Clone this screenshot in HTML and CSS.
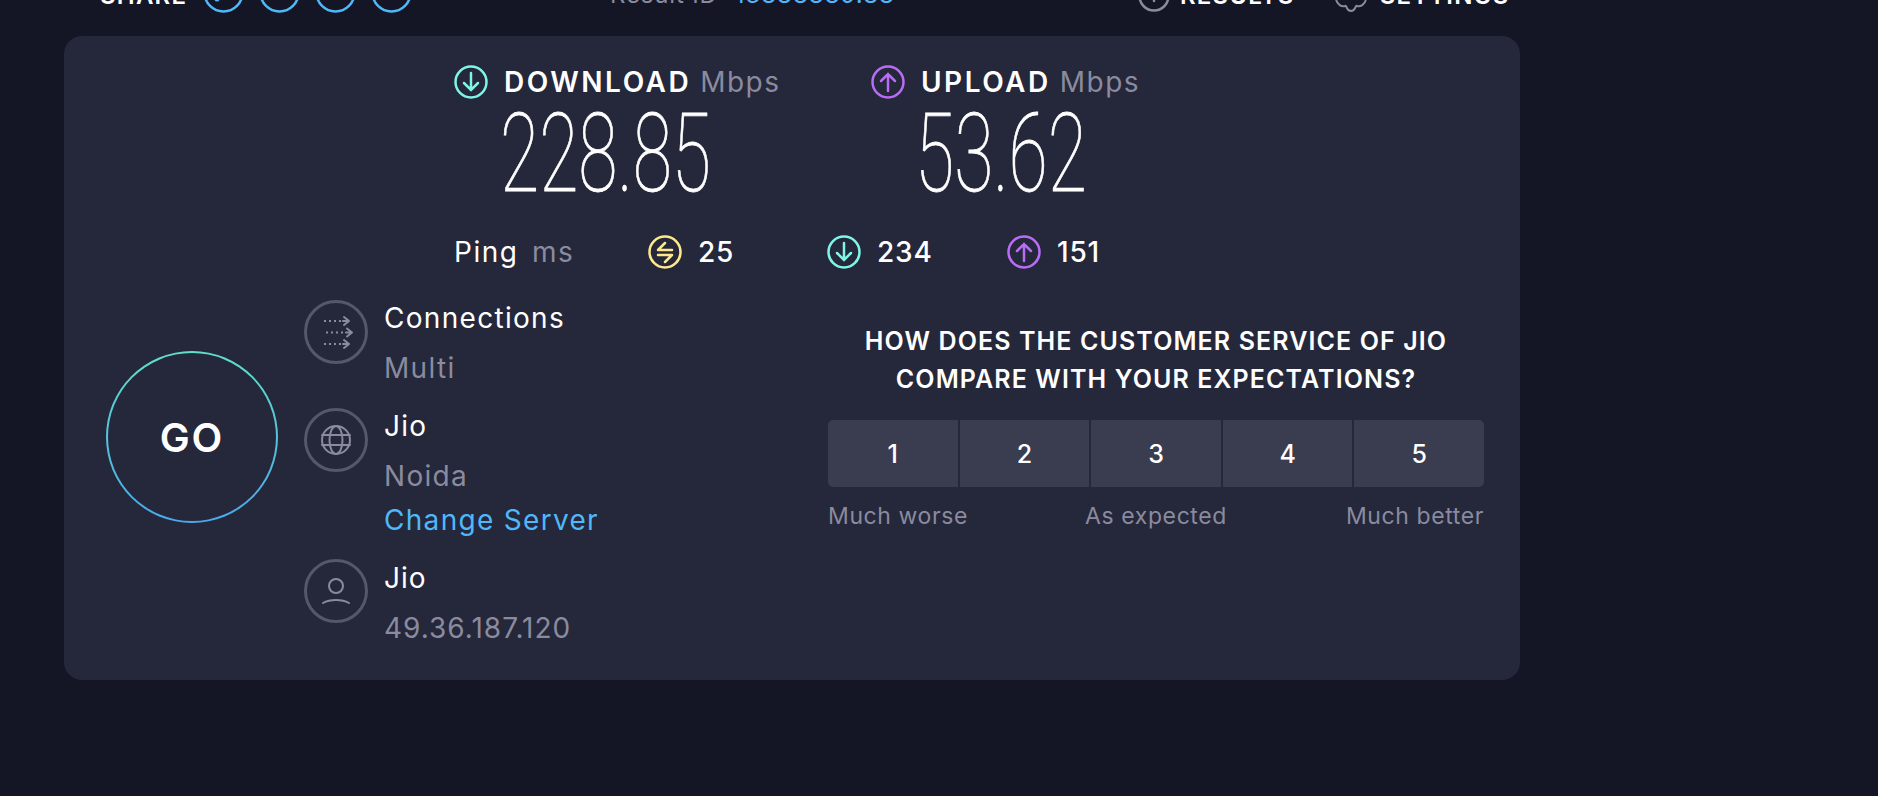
FILE: index.html
```html
<!DOCTYPE html>
<html lang="en">
<head>
<meta charset="utf-8">
<title>Speedtest result</title>
<link rel="stylesheet" href="styles.css">
</head>
<body>
<div class="page">
  <header class="topbar">
    <div class="share">
      <span class="top-label share-label">SHARE</span>
      <svg class="share-dot" viewBox="0 0 41 41"><circle cx="20.500" cy="20.500" r="19"/><circle class="dot-fill" cx="14" cy="27" r="2.500"/></svg>
      <svg class="share-dot" viewBox="0 0 41 41"><circle cx="20.500" cy="20.500" r="19"/></svg>
      <svg class="share-dot" viewBox="0 0 41 41"><circle cx="20.500" cy="20.500" r="19"/></svg>
      <svg class="share-dot" viewBox="0 0 41 41"><circle cx="20.500" cy="20.500" r="19"/></svg>
    </div>
    <div class="result-id"><span class="muted">Result ID</span><a class="link">13888889.88</a></div>
    <div class="top-actions">
      <svg class="top-icon" viewBox="0 0 32 32"><circle cx="16" cy="16" r="14.500"/><path d="M16 18v3"/></svg>
      <span class="top-label">RESULTS</span>
      <svg class="gear" viewBox="0 0 32 40"><path d="M1 27C2 33 7 35 10 34C12 33 11 39 16 39C21 39 20 33 22 34C25 35 30 33 31 27"/></svg>
      <span class="top-label">SETTINGS</span>
    </div>
  </header>

  <main class="card">
    <section class="speeds">
      <div class="speed speed-down">
        <div class="speed-head">
          <svg class="ico teal" viewBox="0 0 34 34"><circle cx="17" cy="17" r="15.500"/><path d="M17 8v17M10 18l7 7 7-7"/></svg>
          <span class="speed-title">DOWNLOAD</span><span class="speed-unit">Mbps</span>
        </div>
        <div class="speed-value">228.85</div>
      </div>
      <div class="speed speed-up">
        <div class="speed-head">
          <svg class="ico purple" viewBox="0 0 34 34"><circle cx="17" cy="17" r="15.500"/><path d="M17 26V9M10 16l7-7 7 7"/></svg>
          <span class="speed-title">UPLOAD</span><span class="speed-unit">Mbps</span>
        </div>
        <div class="speed-value">53.62</div>
      </div>
    </section>

    <section class="ping">
      <span class="ping-name">Ping</span><span class="ping-unit">ms</span>
      <svg class="ico yellow ping-ico" viewBox="0 0 34 34"><circle cx="17" cy="17" r="15.500"/><path d="M24 15H10l7-7M10 20h14l-7 7" stroke-linejoin="round"/></svg>
      <span class="ping-val v-ping">25</span>
      <svg class="ico teal ping-ico" viewBox="0 0 34 34"><circle cx="17" cy="17" r="15.500"/><path d="M17 8v17M10 18l7 7 7-7"/></svg>
      <span class="ping-val v-dl">234</span>
      <svg class="ico purple ping-ico" viewBox="0 0 34 34"><circle cx="17" cy="17" r="15.500"/><path d="M17 26V9M10 16l7-7 7 7"/></svg>
      <span class="ping-val">151</span>
    </section>

    <section class="lower">
      <button class="go">GO</button>

      <div class="details">
        <div class="detail d-conn">
          <svg class="detail-ico" viewBox="0 0 64 64"><circle cx="32" cy="32" r="30.500"/><g class="glyph"><path class="dots" d="M20 21h19M22 32.500h20M20 44h19"/><path d="M40 17l5 4-5 4M43 28.500l5 4-5 4M40 40l5 4-5 4M39 21h6M42 32.500h6M39 44h6"/></g></svg>
          <div class="detail-text"><div class="detail-name">Connections</div><div class="detail-sub">Multi</div></div>
        </div>
        <div class="detail d-server">
          <svg class="detail-ico" viewBox="0 0 64 64"><circle cx="32" cy="32" r="30.500"/><g class="glyph"><circle cx="32" cy="32" r="14"/><ellipse cx="32" cy="32" rx="6.500" ry="14"/><path d="M18 27h28M18 37h28"/></g></svg>
          <div class="detail-text"><div class="detail-name">Jio</div><div class="detail-sub">Noida</div><a class="change">Change Server</a></div>
        </div>
        <div class="detail d-user">
          <svg class="detail-ico" viewBox="0 0 64 64"><circle cx="32" cy="32" r="30.500"/><g class="glyph"><circle cx="32" cy="27" r="7"/><path d="M19 44c7-4 19-4 26 0"/></g></svg>
          <div class="detail-text"><div class="detail-name">Jio</div><div class="detail-sub">49.36.187.120</div></div>
        </div>
      </div>

      <div class="survey">
        <h2 class="question">HOW DOES THE CUSTOMER SERVICE OF JIO<br>COMPARE WITH YOUR EXPECTATIONS?</h2>
        <div class="scale">
          <button class="cell">1</button><button class="cell">2</button><button class="cell">3</button><button class="cell">4</button><button class="cell">5</button>
        </div>
        <div class="scale-labels"><span>Much worse</span><span>As expected</span><span class="label-end">Much better</span></div>
      </div>
    </section>
  </main>
</div>
</body>
</html>
```
FILE: styles.css
```css
* { box-sizing: border-box; }
html, body { margin: 0; height: 100%; overflow: hidden; }
body { background: #141525; color: #fff; font-family: Inter, "Noto Sans", sans-serif; }
.page { padding-left: 64px; width: 1520px; }

.topbar { display: flex; align-items: flex-start; height: 64px; margin-top: -28px; }
.share { display: flex; margin-left: 36px; width: 510px; flex: none; }
.top-label { font-size: 24px; font-weight: 600; line-height: 40px; margin-top: 4px; letter-spacing: 1.200px; white-space: nowrap; }
.share-label { width: 103px; flex: none; }
.share-dot { width: 41px; height: 41px; margin-right: 15px; flex: none; fill: none; stroke: #4fb8f9; stroke-width: 2.500; }
.dot-fill { fill: #4fb8f9; stroke: none; }
.result-id { font-size: 24px; line-height: 40px; margin-top: 3px; width: 528px; flex: none; letter-spacing: .8px; white-space: nowrap; }
.muted { color: #8a8b9f; }
.link { color: #4fb8f9; margin-left: 17px; letter-spacing: 1px; }
.top-actions { display: flex; align-items: flex-start; }
.top-icon { width: 32px; height: 32px; margin: 8px 10px 0 0; flex: none; fill: none; stroke: #8a8b9f; stroke-width: 2.500; stroke-linecap: round; }
.gear { width: 32px; height: 40px; margin: 0 13px 0 40px; flex: none; fill: none; stroke: #8a8b9f; stroke-width: 2; }

.card { width: 1456px; height: 644px; background: #25273a; border-radius: 18px; }

.speeds { display: flex; padding: 28px 0 0 390px; }
.speed { height: 139px; }
.speed-down { width: 417px; }
.speed-head { display: flex; align-items: center; height: 35px; }
.ico { width: 34px; height: 34px; fill: none; stroke-width: 2.500; stroke-linecap: round; flex: none; }
.teal { stroke: #7ef5e6; }
.purple { stroke: #b96cf6; }
.yellow { stroke: #fde98c; }
.speed-title { font-size: 28px; font-weight: 600; margin-left: 16px; letter-spacing: 2.500px; }
.speed-unit { font-size: 28px; color: #8a8b9f; margin-left: 9px; letter-spacing: 1.500px; }
.speed-value { font-family: Roboto, sans-serif; font-weight: 100; font-size: 110px; line-height: 96px; transform: scaleX(.65); transform-origin: left center; margin: 7px 0 0 46px; white-space: nowrap; -webkit-text-stroke: .8px #fff; }
.speed-up .speed-value { margin-left: 44px; }

.ping { display: flex; align-items: center; height: 35px; margin-top: 31px; padding-left: 390px; font-size: 28px; letter-spacing: 1.500px; }
.ping-name { width: 78px; }
.ping-unit { color: #8a8b9f; width: 116px; }
.ping-ico { margin-right: 16px; }
.ping-val { font-weight: 500; letter-spacing: .8px; }
.v-ping { width: 129px; }
.v-dl { width: 130px; }

.lower { position: relative; display: flex; margin-top: 31px; }
.go { position: absolute; left: 42px; top: 51px; width: 172px; height: 172px; border-radius: 50%; border: 2px solid transparent; background: linear-gradient(#25273a, #25273a) padding-box, linear-gradient(#5fe0c9, #4aa8ec) border-box; color: #fff; font: 600 40px Inter, sans-serif; letter-spacing: 2px; padding: 0; }
.details { margin-left: 240px; width: 524px; flex: none; }
.detail { display: flex; gap: 16px; }
.d-conn { height: 108px; }
.d-server { height: 151px; }
.detail-ico { width: 64px; height: 64px; flex: none; fill: none; stroke: #565769; stroke-width: 3; }
.glyph { stroke: #8a8b9f; stroke-width: 2; stroke-linecap: round; stroke-linejoin: round; }
.dots { stroke-dasharray: 2 3; stroke-linecap: butt; }
.detail-text { font-size: 28px; line-height: 50px; margin-top: -7px; letter-spacing: 1.300px; }
.d-user .detail-text { margin-top: -6px; letter-spacing: 1px; }
.detail-sub { color: #8a8b9f; }
.change { color: #4fb8f9; display: block; line-height: 38px; }

.survey { width: 656px; flex: none; text-align: center; margin-top: 22px; }
.question { margin: 0; font-size: 25px; font-weight: 600; line-height: 38px; letter-spacing: 1.100px; }
.scale { display: flex; gap: 2px; height: 67px; margin-top: 22px; border-radius: 5px; overflow: hidden; }
.cell { flex: 1; background: #3a3c4f; border: 0; color: #fff; font: 500 25px Inter, sans-serif; padding: 0; }
.scale-labels { display: grid; grid-template-columns: 1fr auto 1fr; color: #8a8b9f; font-size: 23px; line-height: 30px; margin-top: 14px; letter-spacing: .6px; text-align: left; }
.label-end { text-align: right; }
```
